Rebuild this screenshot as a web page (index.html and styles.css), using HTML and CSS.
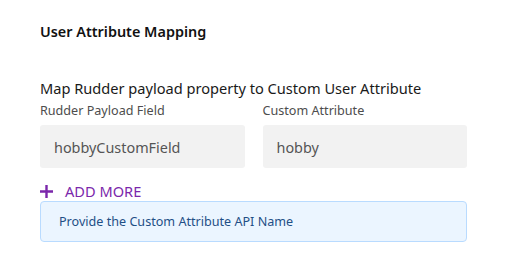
FILE: index.html
```html
<!DOCTYPE html>
<html lang="en">
<head>
    <meta charset="UTF-8">
    <title>User Attribute Mapping</title>
    <link rel="stylesheet" href="styles.css">
</head>
<body>
    <div class="panel">
        <h2 class="section-title">User Attribute Mapping</h2>
        <h3 class="map-title">Map Rudder payload property to Custom User Attribute</h3>
        <div class="map-row">
            <div class="field">
                <label>Rudder Payload Field</label>
                <div class="input">hobbyCustomField</div>
            </div>
            <div class="field">
                <label>Custom Attribute</label>
                <div class="input">hobby</div>
            </div>
        </div>
        <button class="add-more">
            <svg width="13" height="13" viewBox="0 0 13 13"><path d="M6.5 0v13M0 6.5h13" stroke="#7b27ab" stroke-width="2.4"/></svg>
            <span>ADD MORE</span>
        </button>
        <div class="info">Provide the Custom Attribute API Name</div>
    </div>
</body>
</html>
```

FILE: styles.css
```css
body {
    margin: 0;
    font-family: "Noto Sans", "Open Sans", sans-serif;
    background: #fff;
}

.panel {
    padding: 22px 41px 0 40px;
    width: 427px;
}

.section-title {
    margin: 0;
    font-size: 14.4px;
    font-weight: 600;
    color: #111;
    line-height: 20px;
}

.map-title {
    margin: 36px 0 0;
    font-size: 14.6px;
    font-weight: 400;
    color: #1a1a1a;
    line-height: 21px;
}

.map-row {
    display: flex;
    gap: 18px;
    margin-top: 3px;
}

.field {
    flex: 1;
}

.field label {
    display: block;
    font-size: 12.6px;
    color: #4d4d4d;
    line-height: 18px;
}

.input {
    margin-top: 5px;
    height: 43px;
    line-height: 45px;
    background: #f2f2f2;
    border-radius: 3px;
    padding-left: 14px;
    font-size: 14.4px;
    color: #555;
}

.add-more {
    display: flex;
    align-items: center;
    gap: 12px;
    margin-top: 14px;
    padding: 0;
    border: none;
    background: none;
    font-family: inherit;
    font-size: 14.6px;
    color: #7b27ab;
    line-height: 18px;
    cursor: pointer;
}

.info {
    margin-top: 1px;
    height: 39px;
    line-height: 39px;
    padding-left: 18px;
    background: #ebf5ff;
    border: 1px solid #b9dbff;
    border-radius: 4px;
    font-size: 12.6px;
    color: #1f4f86;
}
```
